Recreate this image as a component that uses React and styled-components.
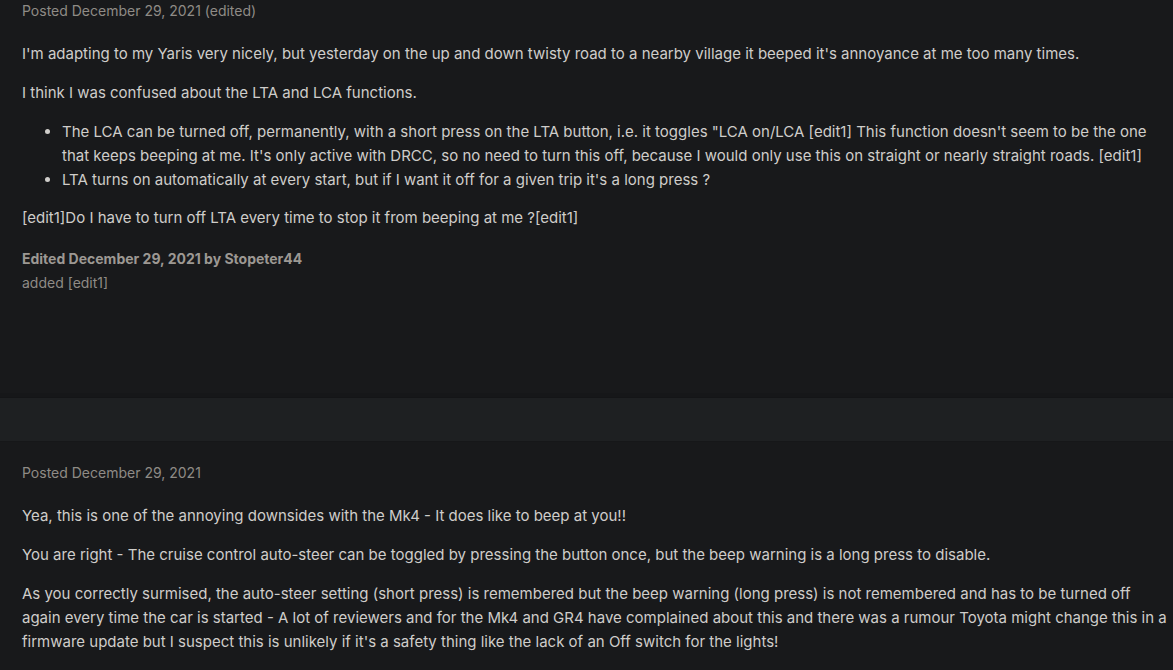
import React from "react";
import styled, { createGlobalStyle } from "styled-components";

const Global = createGlobalStyle`
  html, body {
    margin: 0;
    padding: 0;
    background: #18191b;
  }
  body {
    font-family: Inter, "Noto Sans", sans-serif;
    color: #cfcdca;
  }
`;

const Page = styled.div`
  width: 1173px;
  height: 670px;
  overflow: hidden;
  background: #18191b;
`;

const Post = styled.article`
  padding: ${props => props.pad} 5px 0 22px;
  min-height: ${props => props.minH || "auto"};
  box-sizing: border-box;
`;

const Meta = styled.div`
  font-size: 14px;
  line-height: 20px;
  color: #8f8b86;
  margin-bottom: 21px;
`;

const Body = styled.div`
  font-size: 15px;
  line-height: 24px;
  color: #cfcdca;
  p {
    margin: 0 0 15px 0;
  }
  ul {
    margin: 0 0 14px 0;
    padding-left: 40px;
  }
  li {
    line-height: 24px;
  }
`;

const EditNote = styled.div`
  margin-top: 17px;
  font-size: 14px;
  line-height: 24px;
  color: #8f8b86;
  strong {
    font-weight: 700;
    color: #9c9893;
  }
`;

const Divider = styled.div`
  height: 43px;
  background: #1e2022;
  border-top: 1px solid #141517;
  border-bottom: 1px solid #161719;
  box-shadow: 0 -4px 0 #161719;
`;

export default function App() {
  return (
    <Page>
      <Global />
      <Post pad="1px" minH="397px">
        <Meta>Posted December 29, 2021 (edited)</Meta>
        <Body>
          <p>I'm adapting to my Yaris very nicely, but yesterday on the up and down twisty road to a nearby village it beeped it's annoyance at me too many times.</p>
          <p>I think I was confused about the LTA and LCA functions.</p>
          <ul>
            <li>The LCA can be turned off, permanently, with a short press on the LTA button, i.e. it toggles "LCA on/LCA [edit1] This function doesn't seem to be the one that keeps beeping at me. It's only active with DRCC, so no need to turn this off, because I would only use this on straight or nearly straight roads. [edit1]</li>
            <li>LTA turns on automatically at every start, but if I want it off for a given trip it's a long press ?</li>
          </ul>
          <p>[edit1]Do I have to turn off LTA every time to stop it from beeping at me ?[edit1]</p>
        </Body>
        <EditNote>
          <strong>Edited December 29, 2021 by Stopeter44</strong>
          <div>added [edit1]</div>
        </EditNote>
      </Post>
      <Divider />
      <Post pad="21px">
        <Meta>Posted December 29, 2021</Meta>
        <Body>
          <p>Yea, this is one of the annoying downsides with the Mk4 - It does like to beep at you!!</p>
          <p>You are right - The cruise control auto-steer can be toggled by pressing the button once, but the beep warning is a long press to disable.</p>
          <p>As you correctly surmised, the auto-steer setting (short press) is remembered but the beep warning (long press) is not remembered and has to be turned off again every time the car is started - A lot of reviewers and for the Mk4 and GR4 have complained about this and there was a rumour Toyota might change this in a firmware update but I suspect this is unlikely if it's a safety thing like the lack of an Off switch for the lights!</p>
        </Body>
      </Post>
    </Page>
  );
}
